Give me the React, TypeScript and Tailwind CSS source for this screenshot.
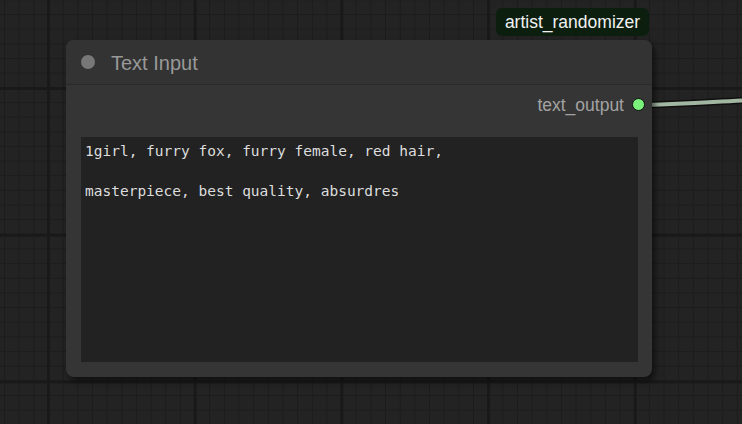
import React from "react";

const SANS = "font-['Liberation_Sans',Arial,sans-serif]";

function OutputSlot() {
  return (
    <div className="flex items-center justify-end h-[38px] -mr-[7px] gap-[8px]">
      <span className={`${SANS} text-[17.5px] text-[#a3a3a3] leading-none pt-[3px]`}>text_output</span>
      <span className="mt-[1px] w-[13px] h-[13px] rounded-full bg-[#7af17a] border-[1.5px] border-[#111] box-border" />
    </div>
  );
}

export default function App() {
  return (
    <div className="relative w-[742px] h-[424px] overflow-hidden bg-[#232323] [background-image:linear-gradient(90deg,#191919_3px,transparent_3px),linear-gradient(180deg,#191919_3px,transparent_3px),linear-gradient(90deg,#1c1c1c_1px,transparent_1px),linear-gradient(180deg,#1c1c1c_1px,transparent_1px)] [background-size:146.7px_146.7px,146.7px_146.7px,14.67px_14.67px,14.67px_14.67px] [background-position:47px_87px,47px_87px,4px_14px,4px_14px]">
      {/* link wire leaving the output slot */}
      <svg className="absolute left-0 top-0" width="742" height="424">
        <path d="M645 105 C 690 104, 710 102, 742 100.5" stroke="#000" strokeOpacity="0.55" strokeWidth="7" fill="none" />
        <path d="M645 105 C 690 104, 710 102, 742 100.5" stroke="#a2b7a2" strokeWidth="4" fill="none" />
      </svg>

      {/* group title badge */}
      <div className={`absolute left-[496px] top-[8px] h-[28px] w-[153px] rounded-[6px] bg-[#0c1f0f] flex items-center justify-center ${SANS} text-[17.5px] text-[#f2f2f2]`}>
        artist_randomizer
      </div>

      {/* node */}
      <div className="absolute left-[66px] top-[40px] w-[586px] h-[337px] rounded-[8px] bg-[#353535] shadow-[3px_4px_6px_rgba(0,0,0,0.55)] flex flex-col">
        <div className="h-[45px] flex items-center border-b border-[#2a2a2a] bg-[#333333] rounded-t-[8px] shrink-0">
          <span className="ml-[15px] w-[14px] h-[14px] rounded-full bg-[#777777]" />
          <span className={`ml-[16px] ${SANS} text-[20px] text-[#999999] leading-none pt-[1px]`}>Text Input</span>
        </div>
        <div className="flex flex-col flex-1 pr-[14px] pl-[15px] pb-[15px]">
          <OutputSlot />
          <div className="mt-[14px] flex-1 bg-[#222222] px-[4px] pt-[4px] font-['DejaVu_Sans_Mono',monospace] text-[14.5px] leading-[20px] text-[#dddddd] whitespace-pre">
            {"1girl, furry fox, furry female, red hair,\n\nmasterpiece, best quality, absurdres"}
          </div>
        </div>
      </div>
    </div>
  );
}
